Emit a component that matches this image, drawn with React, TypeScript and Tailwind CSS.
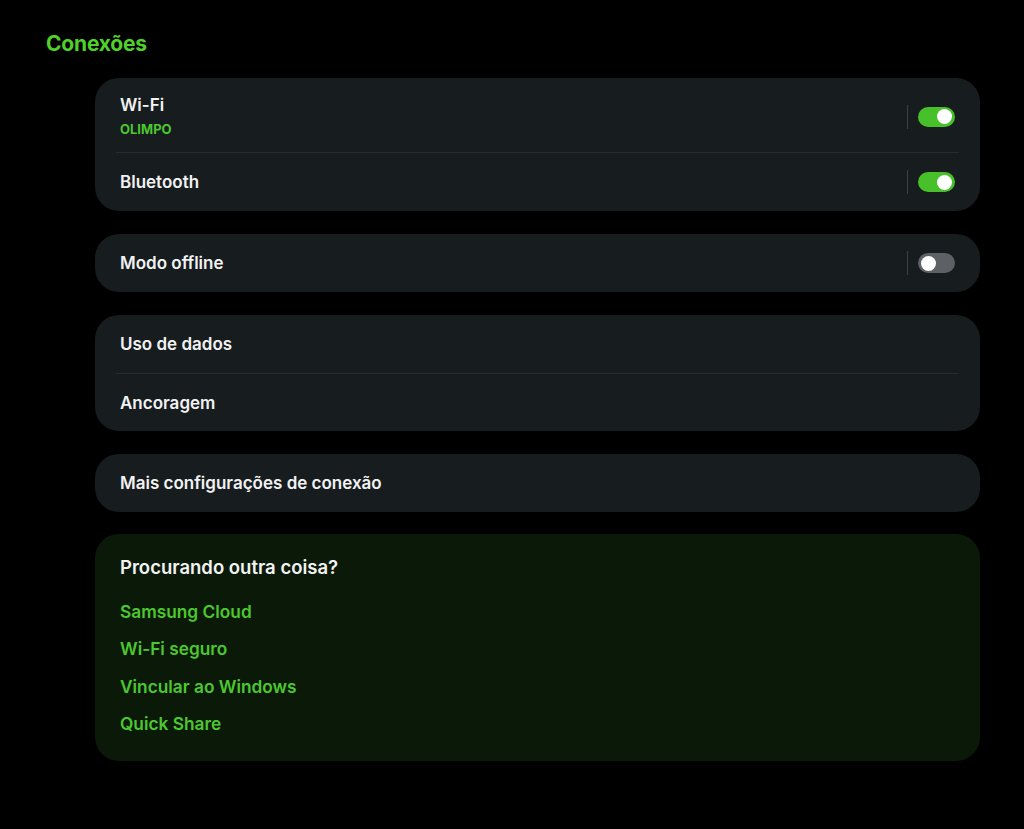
const font = { fontFamily: 'Inter, "Noto Sans", sans-serif' };

type Row = { title: string; subtitle?: string; toggle?: boolean };

const Toggle = ({ on }: { on: boolean }) => (
  <div className="flex items-center gap-[10px]">
    <div className="w-px h-[24px] bg-[#3a4044]" />
    <div
      className={`w-[37px] h-[20px] rounded-full flex items-center px-[3px] ${
        on ? 'bg-[#47c02a] justify-end' : 'bg-[#5d6064] justify-start'
      }`}
    >
      <div className="w-[15px] h-[15px] rounded-full bg-white" />
    </div>
  </div>
);

const Card = ({ rows, tall }: { rows: Row[]; tall?: boolean }) => (
  <div className="bg-[#171c1f] rounded-[24px]">
    {rows.map((row, i) => (
      <div key={row.title}>
        {i > 0 && <div className="mx-[21px] h-px bg-[#262c30]" />}
        <div
          className={`flex items-center justify-between px-[25px] ${
            row.subtitle ? 'h-[74px] pt-[3px]' : i > 0 && !tall ? 'h-[57px]' : 'h-[58px]'
          }`}
        >
          <div className="flex flex-col">
            <span className="text-[17px] font-semibold text-[#f2f2f2] leading-[22px]">
              {row.title}
            </span>
            {row.subtitle && (
              <span className="text-[13px] font-bold text-[#4cc730] leading-[22px] mt-[2px]">
                {row.subtitle}
              </span>
            )}
          </div>
          {row.toggle !== undefined && <Toggle on={row.toggle} />}
        </div>
      </div>
    ))}
  </div>
);

export default function App() {
  const links = ['Samsung Cloud', 'Wi-Fi seguro', 'Vincular ao Windows', 'Quick Share'];
  return (
    <div className="min-h-[829px] bg-black" style={font}>
      <div className="pt-[30px] pl-[46px]">
        <h1 className="text-[21px] font-bold text-[#4fd12a] leading-[28px] tracking-[-0.2px]">Conexões</h1>
      </div>
      <div className="ml-[95px] mr-[44px] mt-[20px] flex flex-col gap-[23px]">
        <Card
          tall
          rows={[
            { title: 'Wi-Fi', subtitle: 'OLIMPO', toggle: true },
            { title: 'Bluetooth', toggle: true },
          ]}
        />
        <Card rows={[{ title: 'Modo offline', toggle: false }]} />
        <Card rows={[{ title: 'Uso de dados' }, { title: 'Ancoragem' }]} />
        <Card rows={[{ title: 'Mais configurações de conexão' }]} />
        <div className="bg-[#0b1a08] rounded-[24px] pl-[25px] pt-[21px] pb-[18px] -mt-px">
          <div className="text-[18.5px] font-semibold text-[#f2f2f2] leading-[24px] mb-[14px]">
            Procurando outra coisa?
          </div>
          <div className="flex flex-col">
            {links.map((l) => (
              <div key={l} className="text-[17.3px] font-semibold text-[#4cc730] h-[37.5px] flex items-center">
                {l}
              </div>
            ))}
          </div>
        </div>
      </div>
    </div>
  );
}
